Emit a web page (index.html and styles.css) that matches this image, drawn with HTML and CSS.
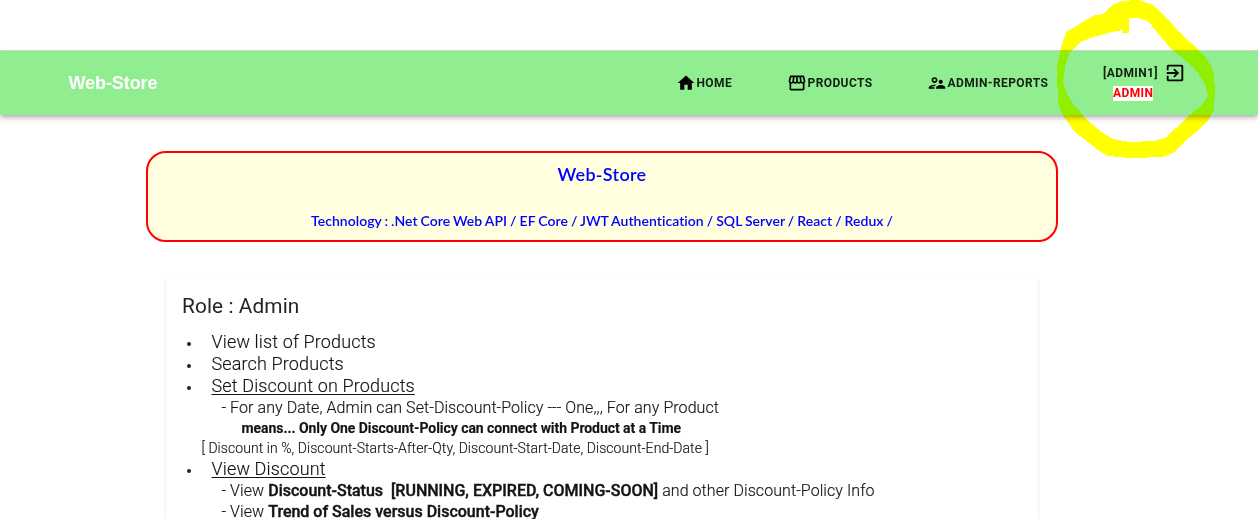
FILE: index.html
```html
<!DOCTYPE html>
<html lang="en">
<head>
<meta charset="utf-8">
<title>Web-Store</title>
<link rel="stylesheet" href="styles.css">
</head>
<body>
<header class="appbar">
  <div class="brand">Web-Store</div>
  <nav class="nav">
    <a class="link home"><svg class="icon" viewBox="0 0 24 24"><path d="M10 20v-6h4v6h5v-8h3L12 3 2 12h3v8z"/></svg><span>HOME</span></a>
    <a class="link products"><svg class="icon" viewBox="0 0 24 24"><path d="M21.9 8.89l-1.05-4.37c-.22-.9-1-1.52-1.91-1.52H5.05c-.9 0-1.69.63-1.9 1.52L2.1 8.89c-.24 1.02-.02 2.06.62 2.88.08.11.19.19.28.29V19c0 1.1.9 2 2 2h14c1.1 0 2-.9 2-2v-6.94c.09-.09.2-.18.28-.28.64-.82.87-1.87.62-2.89zm-2.99-3.9l1.05 4.37c.1.42.01.84-.25 1.17-.14.18-.44.47-.94.47-.61 0-1.14-.49-1.21-1.14L16.98 5l1.93-.01zM13 5h1.96l.54 4.52c.05.39-.07.78-.33 1.07-.22.26-.54.41-.95.41-.67 0-1.22-.59-1.22-1.31V5zM8.49 9.52L9.04 5H11v4.69c0 .72-.55 1.31-1.29 1.31-.34 0-.65-.15-.89-.41-.25-.29-.37-.68-.33-1.07zm-4.45-.16L5.05 5h1.97l-.58 4.86c-.08.65-.6 1.14-1.21 1.14-.49 0-.8-.29-.93-.47-.27-.32-.36-.75-.26-1.17zM5 19v-6.03c.08.01.15.03.23.03.87 0 1.66-.36 2.24-.95.6.6 1.4.95 2.31.95.87 0 1.65-.36 2.23-.93.59.57 1.39.93 2.29.93.84 0 1.64-.35 2.24-.95.58.59 1.37.95 2.24.95.08 0 .15-.02.23-.03V19H5z"/></svg><span>PRODUCTS</span></a>
    <a class="link reports"><svg class="icon" viewBox="0 0 24 24"><path d="M9 12c1.93 0 3.5-1.57 3.5-3.5S10.93 5 9 5 5.5 6.57 5.5 8.5 7.07 12 9 12zm0-5c.83 0 1.5.67 1.5 1.5S9.83 10 9 10s-1.500-.67-1.500-1.500S8.170 7 9 7zm.05 10H4.770c.99-.5 2.700-1 4.230-1 .11 0 .23.01.34.01.34-.73.93-1.330 1.640-1.810-.73-.13-1.420-.2-1.980-.2-2.340 0-7 1.170-7 3.500V19h7v-1.500c0-.17.02-.34.05-.5zm7.450-2.500c-1.840 0-5.500 1.010-5.500 3V19h11v-1.500c0-1.990-3.660-3-5.500-3zm1.210-1.820c.76-.43 1.290-1.240 1.290-2.180C19 9.120 17.880 8 16.500 8S14 9.120 14 10.500c0 .94.53 1.750 1.290 2.180.36.2.77.32 1.210.32s.85-.12 1.210-.32z"/></svg><span>ADMIN-REPORTS</span></a>
  </nav>
  <div class="account">
    <div class="user"><span>[ADMIN1]</span><svg class="exit" viewBox="0 0 24 24"><path d="M10.090 15.590L11.500 17l5-5-5-5-1.410 1.410L12.670 11H3v2h9.670l-2.580 2.590zM19 3H5c-1.110 0-2 .9-2 2v4h2V5h14v14H5v-4H3v4c0 1.100.89 2 2 2h14c1.100 0 2-.9 2-2V5c0-1.100-.9-2-2-2z"/></svg></div>
    <span class="role">ADMIN</span>
  </div>
</header>
<main>
  <section class="banner">
    <h1>Web-Store</h1>
    <p>Technology : .Net Core Web API / EF Core / JWT Authentication / SQL Server / React / Redux /</p>
  </section>
  <section class="card">
    <h2>Role : Admin</h2>
    <ul class="features">
      <li>View list of Products</li>
      <li>Search Products</li>
      <li><u>Set Discount on Products</u>
        <div class="detail">- For any Date, Admin can Set-Discount-Policy --- One,,, For any Product</div>
        <div class="note">means... Only One Discount-Policy can connect with Product at a Time</div>
        <div class="fields">[ Discount in %, Discount-Starts-After-Qty, Discount-Start-Date, Discount-End-Date ]</div>
      </li>
      <li><u>View Discount</u>
        <div class="detail">- View <b>Discount-Status &nbsp;[RUNNING, EXPIRED, COMING-SOON]</b> and other Discount-Policy Info</div>
        <div class="detail">- View <b>Trend of Sales versus Discount-Policy</b></div>
      </li>
    </ul>
  </section>
</main>
<svg class="marker" viewBox="1040 0 218 170"><path shape-rendering="crispEdges" fill-rule="evenodd" d="M1066 32L1095 15L1104 14L1112 5L1122 1L1138 0L1153 5L1165 16L1182 35L1199 50L1207 59L1213 70L1215 87L1214 109L1208 121L1196 132L1184 142L1173 153L1163 157L1131 158L1108 156L1098 150L1075 132L1064 117L1058 104L1057 68L1061 48ZM1079 43L1070 52L1065 67L1063 82L1066 92L1073 104L1087 120L1103 133L1113 139L1130 142L1153 141L1165 138L1176 128L1190 115L1202 105L1208 96L1206 86L1196 70L1185 60L1170 48L1157 32L1148 21L1138 18L1129 18L1129 33L1122 33L1122 30L1107 33L1102 35L1093 37Z"/></svg>
</body>
</html>
```
FILE: styles.css
```css
* { box-sizing: border-box; }
body {
  margin: 0;
  height: 519px;
  padding-top: 51px;
  overflow: hidden;
  position: relative;
  background: #fff;
  color: #212529;
  font-family: Roboto, sans-serif;
}
.appbar {
  height: 64px;
  display: flex;
  background: #90ee90;
  box-shadow: 0 -1px 0 #d3d3d3, 0 2px 4px -1px rgba(0,0,0,.2), 0 4px 5px rgba(0,0,0,.14), 0 1px 10px rgba(0,0,0,.05);
}
.brand {
  width: 676px;
  padding-left: 68.5px;
  font: bold 18px/64px "Liberation Sans", sans-serif;
  letter-spacing: -.08px;
  color: #fff;
}
.nav { display: flex; align-items: center; width: 427px; }
.link {
  display: flex;
  align-items: center;
  color: rgba(0,0,0,.87);
  font-size: 12px;
  font-weight: 700;
  letter-spacing: .4px;
  white-space: nowrap;
}
.link span { margin-left: .5px; }
.home { width: 111px; }
.products { width: 140px; }
.icon { width: 20px; height: 20px; flex: none; fill: #000; }
.account {
  width: 90px;
  padding-top: 11px;
  font-size: 12px;
  font-weight: 700;
  letter-spacing: .4px;
  color: rgba(0,0,0,.87);
}
.user { height: 21px; display: flex; align-items: center; gap: 6px; }
.exit { width: 22px; height: 22px; fill: #000; }
.role {
  display: inline-block;
  margin: 3px 0 0 10px;
  line-height: 15px;
  background: #fff;
  color: red;
}
.banner {
  width: 912px;
  height: 91px;
  margin: 36px 0 0 146px;
  border: 2px solid red;
  border-radius: 20px;
  background: #ffffe0;
  color: blue;
  text-align: center;
  font-family: Lato, sans-serif;
  font-variant-ligatures: none;
}
.banner h1 { margin: 10px 0 0; font-size: 18px; line-height: 22px; font-weight: 600; letter-spacing: .3px; }
.banner p { margin: 27px 0 0; font-size: 14px; line-height: 18px; font-weight: 600; letter-spacing: .04px; word-spacing: -.55px; }
.card {
  width: 872px;
  height: 300px;
  margin: 35px 0 0 166px;
  padding: 16px;
  border-radius: 4px;
  box-shadow: 0 1px 2px rgba(0,0,0,.22);
}
.card h2 { margin: 0; font-size: 20.8px; line-height: 26px; font-weight: 400; letter-spacing: .1px; }
.features {
  margin: 12px 0 0;
  padding-left: 29.5px;
  color: #111417;
  font-size: 18px;
  line-height: 22px;
  font-weight: 300;
  letter-spacing: .14px;
  list-style: none;
  -webkit-text-stroke: .15px currentColor;
}
.features li::before {
  content: "";
  float: left;
  width: 4px;
  height: 4px;
  margin: 11px 0 0 -24.5px;
  border-radius: 50%;
  background: #212529;
}
.features u { text-underline-offset: 2px; text-decoration-thickness: 1px; }
.detail { padding-left: 10px; font-size: 16px; line-height: 21px; letter-spacing: .07px; white-space: nowrap; }
.detail b { font-weight: 500; letter-spacing: 0; -webkit-text-stroke: .4px currentColor; }
.note { padding-left: 30px; font-size: 14px; line-height: 20px; font-weight: 700; letter-spacing: -.05px; white-space: nowrap; }
.fields { margin-left: -10px; font-size: 14px; line-height: 20px; letter-spacing: .06px; white-space: nowrap; }
.marker {
  position: absolute;
  left: 1040px;
  top: 0;
  width: 218px;
  height: 170px;
  fill: #ff0;
  mix-blend-mode: multiply;
}
```
